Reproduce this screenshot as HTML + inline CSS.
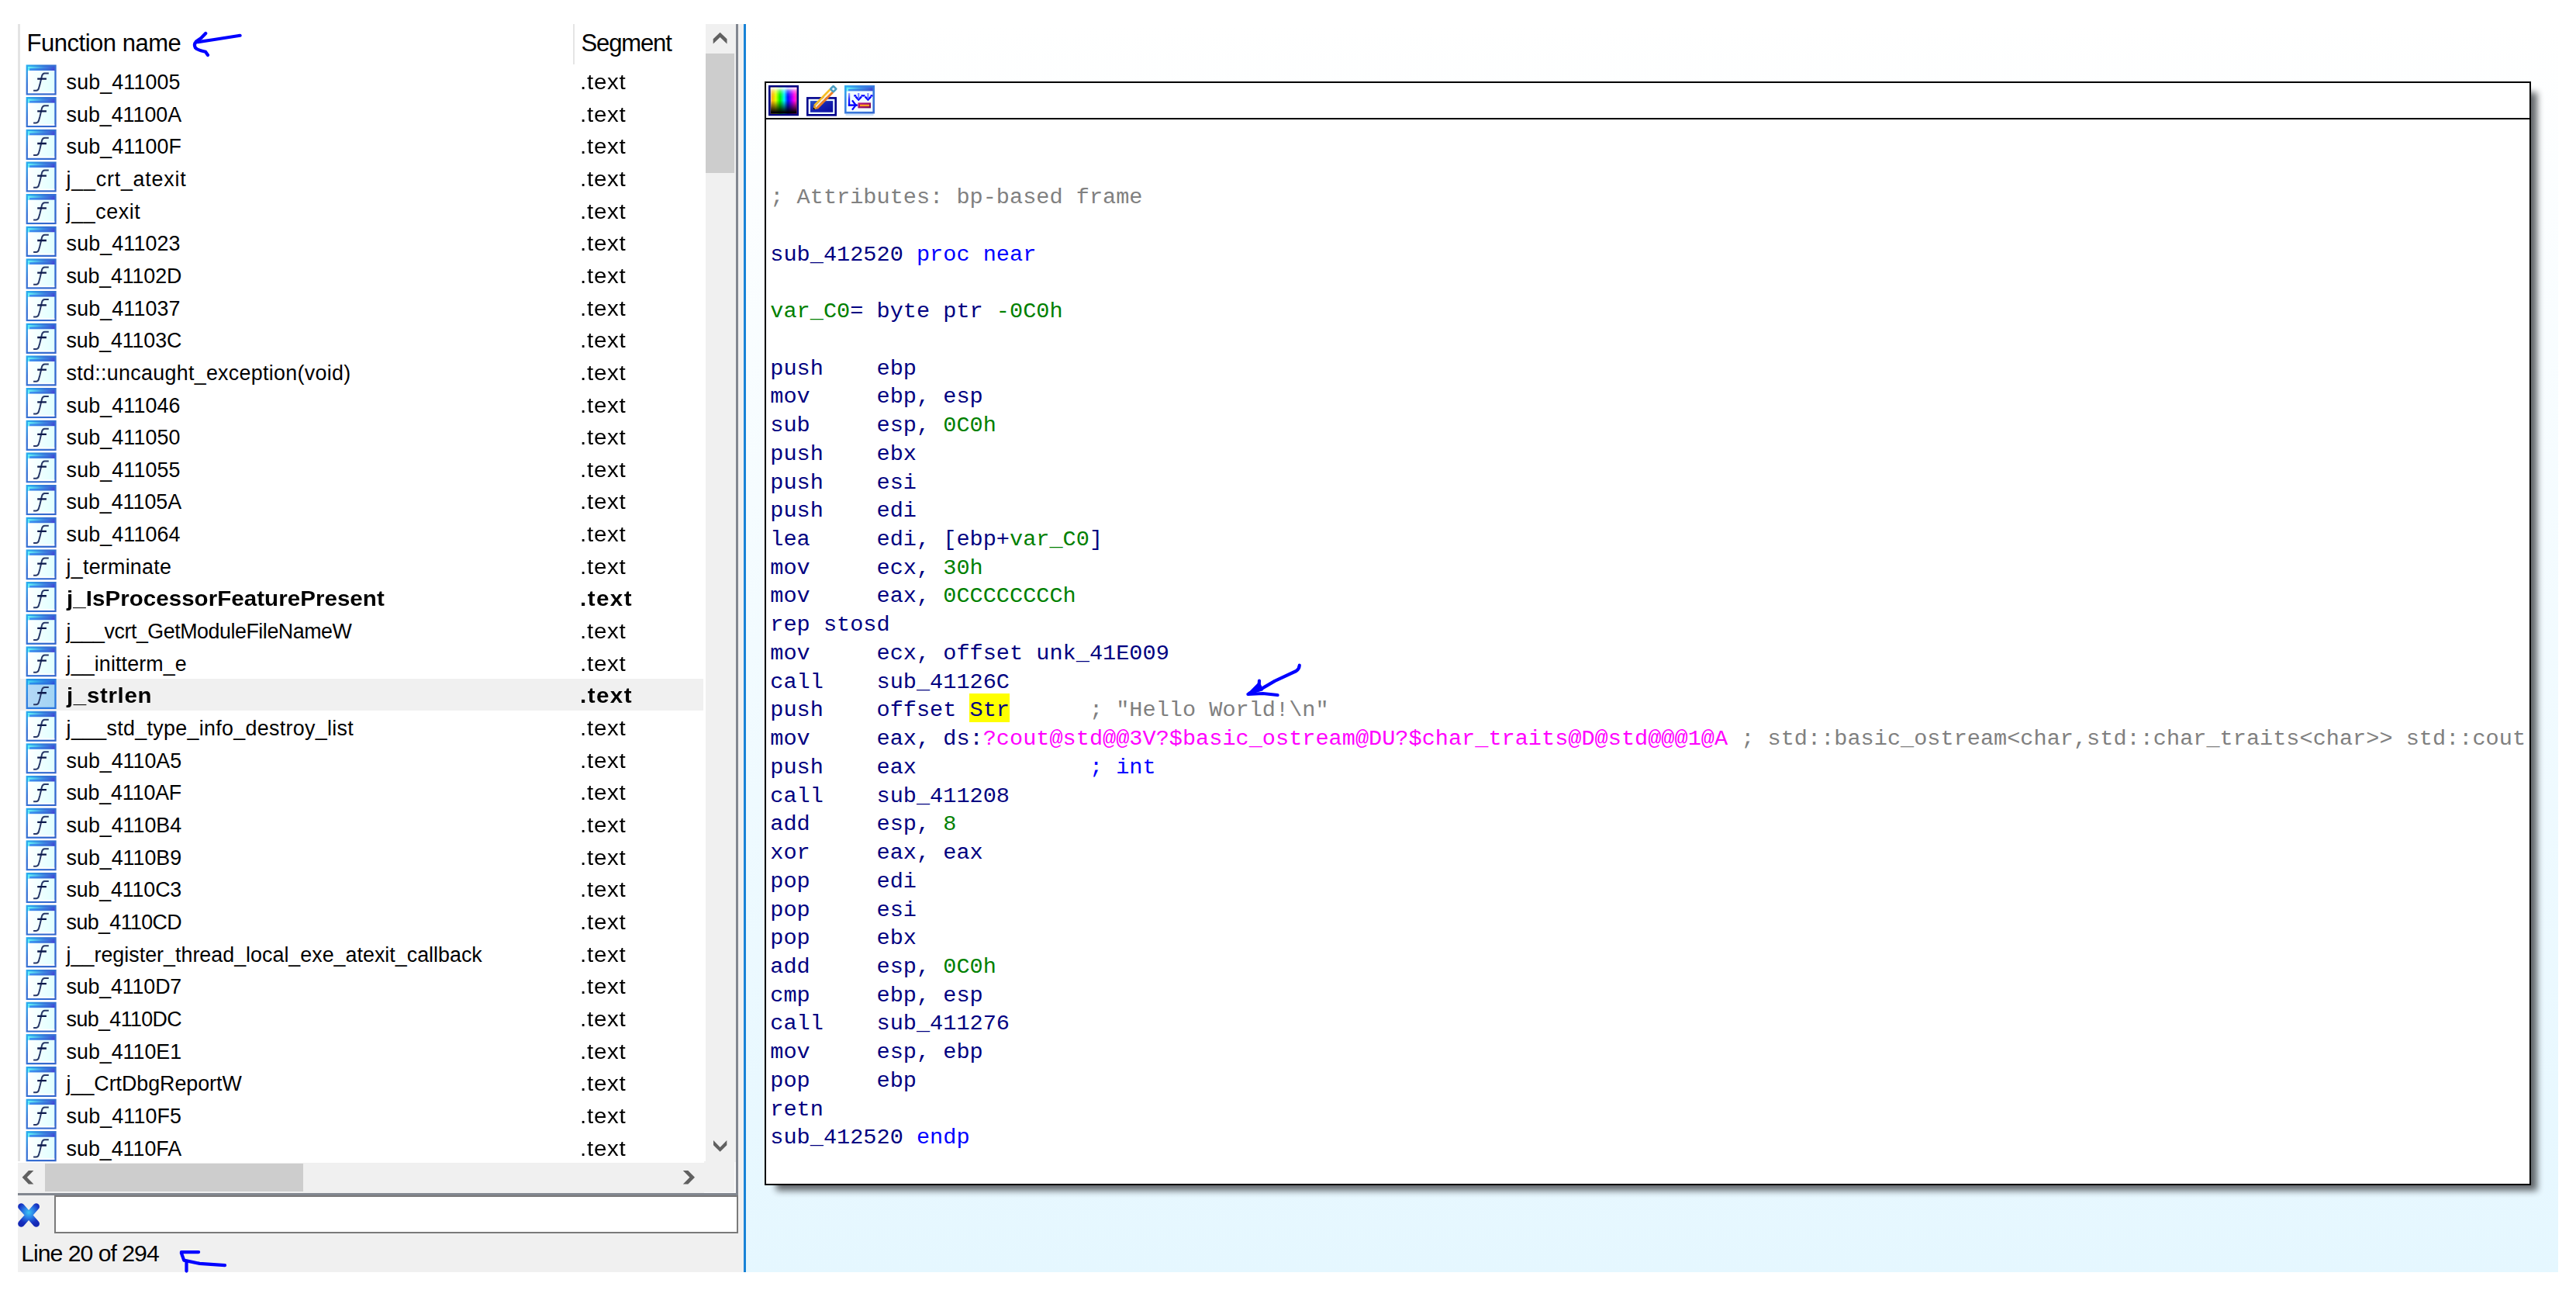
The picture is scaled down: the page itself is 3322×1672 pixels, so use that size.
<!DOCTYPE html>
<html><head><meta charset="utf-8"><title>IDA</title>
<style>
html,body{margin:0;padding:0;background:#fff;}
body{width:3322px;height:1672px;position:relative;overflow:hidden;font-family:"Liberation Sans",sans-serif;color:#000;}
.a{position:absolute;}
.t{position:absolute;white-space:pre;font-size:26.8px;line-height:40px;height:40px;color:#000;}
.b{font-weight:bold;}
.ic{position:absolute;left:33.4px;width:39.4px;height:39.4px;}
#code{position:absolute;left:993.3px;top:237.2px;margin:0;font-family:"Liberation Mono",monospace;font-size:28.54px;line-height:36.74px;white-space:pre;color:#000080;}
#code i{font-style:normal;}
.g{color:#808080;}.bl{color:#0000ff;}.gr{color:#008000;}.pk{color:#ff00ff;}.hl{}
</style></head><body>
<svg width="0" height="0" style="position:absolute">
<defs>
<linearGradient id="fb" x1="0" y1="0" x2="1" y2="1"><stop offset="0" stop-color="#27b4f2"/><stop offset="0.35" stop-color="#3572d6"/><stop offset="1" stop-color="#3566cc"/></linearGradient>
<linearGradient id="ft" x1="0" y1="0" x2="1" y2="0"><stop offset="0" stop-color="#66f6f8"/><stop offset="0.55" stop-color="#3f90e4"/><stop offset="1" stop-color="#3f50d6"/></linearGradient>
<linearGradient id="ft2" x1="0" y1="0" x2="1" y2="0"><stop offset="0" stop-color="#3a92f2"/><stop offset="0.8" stop-color="#3a68d4"/><stop offset="1" stop-color="#4440d8"/></linearGradient>
<linearGradient id="fi" x1="0" y1="0" x2="1" y2="0"><stop offset="0" stop-color="#ffffff"/><stop offset="0.5" stop-color="#eeffff"/><stop offset="1" stop-color="#e0ffff"/></linearGradient>
<linearGradient id="fis" x1="0" y1="0" x2="1" y2="0"><stop offset="0" stop-color="#b4d8f6"/><stop offset="1" stop-color="#a2d4f4"/></linearGradient>
<linearGradient id="fbs" x1="0" y1="0" x2="1" y2="1"><stop offset="0" stop-color="#1ca4f0"/><stop offset="0.35" stop-color="#2a7ce0"/><stop offset="1" stop-color="#2a74dc"/></linearGradient>
<linearGradient id="fts" x1="0" y1="0" x2="1" y2="0"><stop offset="0" stop-color="#44d8f4"/><stop offset="0.55" stop-color="#2f8fe6"/><stop offset="1" stop-color="#2c60dc"/></linearGradient>
<linearGradient id="fts2" x1="0" y1="0" x2="1" y2="0"><stop offset="0" stop-color="#2a90ee"/><stop offset="0.8" stop-color="#2a6cdc"/><stop offset="1" stop-color="#3048dc"/></linearGradient>
<symbol id="f" viewBox="0 0 39.4 39.4">
<rect x="0" y="0" width="39.4" height="39.4" fill="url(#fb)"/>
<rect x="2.5" y="2.5" width="34.4" height="2.6" fill="url(#ft)"/>
<rect x="2.5" y="5.1" width="2.4" height="2.6" fill="#6af2f8"/>
<rect x="4.9" y="5.1" width="32" height="2.6" fill="url(#ft2)"/>
<rect x="2.5" y="7.7" width="34.4" height="29.2" fill="url(#fi)"/>
<rect x="2.5" y="35.2" width="34.4" height="1.7" fill="#ffffff"/>
<path d="M29.4,11.2 L24.2,11.2 Q21.4,11.4 20.6,14.6 L18,25.6 L16.6,30.4 Q15.8,33.4 13.2,33.5 L9.7,33.5" fill="none" stroke="#283868" stroke-width="2.0"/>
<path d="M14.8,18.4 L26.5,18.4" fill="none" stroke="#0c1a4c" stroke-width="2.3"/>
</symbol>
<symbol id="fs" viewBox="0 0 39.4 39.4">
<rect x="0" y="0" width="39.4" height="39.4" fill="url(#fbs)"/>
<rect x="2.5" y="2.5" width="34.4" height="2.6" fill="url(#fts)"/>
<rect x="2.5" y="5.1" width="2.4" height="2.6" fill="#48d4f2"/>
<rect x="4.9" y="5.1" width="32" height="2.6" fill="url(#fts2)"/>
<rect x="2.5" y="7.7" width="34.4" height="29.2" fill="url(#fis)"/>
<path d="M29.4,11.2 L24.2,11.2 Q21.4,11.4 20.6,14.6 L18,25.6 L16.6,30.4 Q15.8,33.4 13.2,33.5 L9.7,33.5" fill="none" stroke="#283868" stroke-width="2.0"/>
<path d="M14.8,18.4 L26.5,18.4" fill="none" stroke="#0c1a4c" stroke-width="2.3"/>
</symbol>
</defs></svg>

<div class="a" style="left:23.2px;top:31px;width:2.7px;height:1466px;background:#e4e4e4"></div>
<div class="t" style="left:34.6px;top:35.9px;font-size:31px;letter-spacing:-0.489px">Function name</div>
<div class="a" style="left:739.2px;top:31px;width:2.2px;height:52px;background:#e5e5e5"></div>
<div class="t" style="left:749.6px;top:35.9px;font-size:31px;letter-spacing:-1.154px">Segment</div>
<div class="a" style="left:25.9px;top:874.9px;width:881.6px;height:41.4px;background:#f0f0f0"></div>
<svg class="a" style="left:33px;top:83px" width="42" height="42"><use href="#f" x="0.4" y="0.30" width="39.4" height="39.4"/></svg>
<div class="t" style="left:85.6px;top:85.90px;letter-spacing:0.145px">sub_411005</div>
<div class="t" style="left:747.5px;top:85.90px;letter-spacing:0.690px;transform:scaleX(1.10);transform-origin:0 0">.text</div>
<svg class="a" style="left:33px;top:124px" width="42" height="42"><use href="#f" x="0.4" y="0.96" width="39.4" height="39.4"/></svg>
<div class="t" style="left:85.6px;top:127.56px;letter-spacing:-0.002px">sub_41100A</div>
<div class="t" style="left:747.5px;top:127.56px;letter-spacing:0.690px;transform:scaleX(1.10);transform-origin:0 0">.text</div>
<svg class="a" style="left:33px;top:166px" width="42" height="42"><use href="#f" x="0.4" y="0.62" width="39.4" height="39.4"/></svg>
<div class="t" style="left:85.6px;top:169.22px;letter-spacing:0.148px">sub_41100F</div>
<div class="t" style="left:747.5px;top:169.22px;letter-spacing:0.690px;transform:scaleX(1.10);transform-origin:0 0">.text</div>
<svg class="a" style="left:33px;top:208px" width="42" height="42"><use href="#f" x="0.4" y="0.28" width="39.4" height="39.4"/></svg>
<div class="t" style="left:85.6px;top:210.88px;letter-spacing:0.794px">j__crt_atexit</div>
<div class="t" style="left:747.5px;top:210.88px;letter-spacing:0.690px;transform:scaleX(1.10);transform-origin:0 0">.text</div>
<svg class="a" style="left:33px;top:249px" width="42" height="42"><use href="#f" x="0.4" y="0.94" width="39.4" height="39.4"/></svg>
<div class="t" style="left:85.6px;top:252.54px;letter-spacing:0.618px">j__cexit</div>
<div class="t" style="left:747.5px;top:252.54px;letter-spacing:0.690px;transform:scaleX(1.10);transform-origin:0 0">.text</div>
<svg class="a" style="left:33px;top:291px" width="42" height="42"><use href="#f" x="0.4" y="0.60" width="39.4" height="39.4"/></svg>
<div class="t" style="left:85.6px;top:294.20px;letter-spacing:0.145px">sub_411023</div>
<div class="t" style="left:747.5px;top:294.20px;letter-spacing:0.690px;transform:scaleX(1.10);transform-origin:0 0">.text</div>
<svg class="a" style="left:33px;top:333px" width="42" height="42"><use href="#f" x="0.4" y="0.26" width="39.4" height="39.4"/></svg>
<div class="t" style="left:85.6px;top:335.86px;letter-spacing:-0.150px">sub_41102D</div>
<div class="t" style="left:747.5px;top:335.86px;letter-spacing:0.690px;transform:scaleX(1.10);transform-origin:0 0">.text</div>
<svg class="a" style="left:33px;top:374px" width="42" height="42"><use href="#f" x="0.4" y="0.92" width="39.4" height="39.4"/></svg>
<div class="t" style="left:85.6px;top:377.52px;letter-spacing:0.145px">sub_411037</div>
<div class="t" style="left:747.5px;top:377.52px;letter-spacing:0.690px;transform:scaleX(1.10);transform-origin:0 0">.text</div>
<svg class="a" style="left:33px;top:416px" width="42" height="42"><use href="#f" x="0.4" y="0.58" width="39.4" height="39.4"/></svg>
<div class="t" style="left:85.6px;top:419.18px;letter-spacing:-0.150px">sub_41103C</div>
<div class="t" style="left:747.5px;top:419.18px;letter-spacing:0.690px;transform:scaleX(1.10);transform-origin:0 0">.text</div>
<svg class="a" style="left:33px;top:458px" width="42" height="42"><use href="#f" x="0.4" y="0.24" width="39.4" height="39.4"/></svg>
<div class="t" style="left:85.6px;top:460.84px;letter-spacing:0.320px">std::uncaught_exception(void)</div>
<div class="t" style="left:747.5px;top:460.84px;letter-spacing:0.690px;transform:scaleX(1.10);transform-origin:0 0">.text</div>
<svg class="a" style="left:33px;top:499px" width="42" height="42"><use href="#f" x="0.4" y="0.90" width="39.4" height="39.4"/></svg>
<div class="t" style="left:85.6px;top:502.50px;letter-spacing:0.145px">sub_411046</div>
<div class="t" style="left:747.5px;top:502.50px;letter-spacing:0.690px;transform:scaleX(1.10);transform-origin:0 0">.text</div>
<svg class="a" style="left:33px;top:541px" width="42" height="42"><use href="#f" x="0.4" y="0.56" width="39.4" height="39.4"/></svg>
<div class="t" style="left:85.6px;top:544.16px;letter-spacing:0.145px">sub_411050</div>
<div class="t" style="left:747.5px;top:544.16px;letter-spacing:0.690px;transform:scaleX(1.10);transform-origin:0 0">.text</div>
<svg class="a" style="left:33px;top:583px" width="42" height="42"><use href="#f" x="0.4" y="0.22" width="39.4" height="39.4"/></svg>
<div class="t" style="left:85.6px;top:585.82px;letter-spacing:0.145px">sub_411055</div>
<div class="t" style="left:747.5px;top:585.82px;letter-spacing:0.690px;transform:scaleX(1.10);transform-origin:0 0">.text</div>
<svg class="a" style="left:33px;top:624px" width="42" height="42"><use href="#f" x="0.4" y="0.88" width="39.4" height="39.4"/></svg>
<div class="t" style="left:85.6px;top:627.48px;letter-spacing:-0.002px">sub_41105A</div>
<div class="t" style="left:747.5px;top:627.48px;letter-spacing:0.690px;transform:scaleX(1.10);transform-origin:0 0">.text</div>
<svg class="a" style="left:33px;top:666px" width="42" height="42"><use href="#f" x="0.4" y="0.54" width="39.4" height="39.4"/></svg>
<div class="t" style="left:85.6px;top:669.14px;letter-spacing:0.145px">sub_411064</div>
<div class="t" style="left:747.5px;top:669.14px;letter-spacing:0.690px;transform:scaleX(1.10);transform-origin:0 0">.text</div>
<svg class="a" style="left:33px;top:708px" width="42" height="42"><use href="#f" x="0.4" y="0.20" width="39.4" height="39.4"/></svg>
<div class="t" style="left:85.6px;top:710.80px;letter-spacing:0.267px">j_terminate</div>
<div class="t" style="left:747.5px;top:710.80px;letter-spacing:0.690px;transform:scaleX(1.10);transform-origin:0 0">.text</div>
<svg class="a" style="left:33px;top:749px" width="42" height="42"><use href="#f" x="0.4" y="0.86" width="39.4" height="39.4"/></svg>
<div class="t b" style="left:85.6px;top:752.46px;letter-spacing:0.061px;transform:scaleX(1.10);transform-origin:0 0">j_IsProcessorFeaturePresent</div>
<div class="t b" style="left:747.5px;top:752.46px;letter-spacing:1.342px;transform:scaleX(1.10);transform-origin:0 0">.text</div>
<svg class="a" style="left:33px;top:791px" width="42" height="42"><use href="#f" x="0.4" y="0.52" width="39.4" height="39.4"/></svg>
<div class="t" style="left:85.6px;top:794.12px;letter-spacing:-0.443px">j___vcrt_GetModuleFileNameW</div>
<div class="t" style="left:747.5px;top:794.12px;letter-spacing:0.690px;transform:scaleX(1.10);transform-origin:0 0">.text</div>
<svg class="a" style="left:33px;top:833px" width="42" height="42"><use href="#f" x="0.4" y="0.18" width="39.4" height="39.4"/></svg>
<div class="t" style="left:85.6px;top:835.78px;letter-spacing:0.137px">j__initterm_e</div>
<div class="t" style="left:747.5px;top:835.78px;letter-spacing:0.690px;transform:scaleX(1.10);transform-origin:0 0">.text</div>
<svg class="a" style="left:33px;top:874px" width="42" height="42"><use href="#fs" x="0.4" y="0.84" width="39.4" height="39.4"/></svg>
<div class="t b" style="left:85.6px;top:877.44px;letter-spacing:0.595px;transform:scaleX(1.10);transform-origin:0 0">j_strlen</div>
<div class="t b" style="left:747.5px;top:877.44px;letter-spacing:1.342px;transform:scaleX(1.10);transform-origin:0 0">.text</div>
<svg class="a" style="left:33px;top:916px" width="42" height="42"><use href="#f" x="0.4" y="0.50" width="39.4" height="39.4"/></svg>
<div class="t" style="left:85.6px;top:919.10px;letter-spacing:0.329px">j___std_type_info_destroy_list</div>
<div class="t" style="left:747.5px;top:919.10px;letter-spacing:0.690px;transform:scaleX(1.10);transform-origin:0 0">.text</div>
<svg class="a" style="left:33px;top:958px" width="42" height="42"><use href="#f" x="0.4" y="0.16" width="39.4" height="39.4"/></svg>
<div class="t" style="left:85.6px;top:960.76px;letter-spacing:-0.002px">sub_4110A5</div>
<div class="t" style="left:747.5px;top:960.76px;letter-spacing:0.690px;transform:scaleX(1.10);transform-origin:0 0">.text</div>
<svg class="a" style="left:33px;top:999px" width="42" height="42"><use href="#f" x="0.4" y="0.82" width="39.4" height="39.4"/></svg>
<div class="t" style="left:85.6px;top:1002.42px;letter-spacing:-0.148px">sub_4110AF</div>
<div class="t" style="left:747.5px;top:1002.42px;letter-spacing:0.690px;transform:scaleX(1.10);transform-origin:0 0">.text</div>
<svg class="a" style="left:33px;top:1041px" width="42" height="42"><use href="#f" x="0.4" y="0.48" width="39.4" height="39.4"/></svg>
<div class="t" style="left:85.6px;top:1044.08px;letter-spacing:-0.002px">sub_4110B4</div>
<div class="t" style="left:747.5px;top:1044.08px;letter-spacing:0.690px;transform:scaleX(1.10);transform-origin:0 0">.text</div>
<svg class="a" style="left:33px;top:1083px" width="42" height="42"><use href="#f" x="0.4" y="0.14" width="39.4" height="39.4"/></svg>
<div class="t" style="left:85.6px;top:1085.74px;letter-spacing:-0.002px">sub_4110B9</div>
<div class="t" style="left:747.5px;top:1085.74px;letter-spacing:0.690px;transform:scaleX(1.10);transform-origin:0 0">.text</div>
<svg class="a" style="left:33px;top:1124px" width="42" height="42"><use href="#f" x="0.4" y="0.80" width="39.4" height="39.4"/></svg>
<div class="t" style="left:85.6px;top:1127.40px;letter-spacing:-0.150px">sub_4110C3</div>
<div class="t" style="left:747.5px;top:1127.40px;letter-spacing:0.690px;transform:scaleX(1.10);transform-origin:0 0">.text</div>
<svg class="a" style="left:33px;top:1166px" width="42" height="42"><use href="#f" x="0.4" y="0.46" width="39.4" height="39.4"/></svg>
<div class="t" style="left:85.6px;top:1169.06px;letter-spacing:-0.594px">sub_4110CD</div>
<div class="t" style="left:747.5px;top:1169.06px;letter-spacing:0.690px;transform:scaleX(1.10);transform-origin:0 0">.text</div>
<svg class="a" style="left:33px;top:1208px" width="42" height="42"><use href="#f" x="0.4" y="0.12" width="39.4" height="39.4"/></svg>
<div class="t" style="left:85.6px;top:1210.72px;letter-spacing:0.032px">j__register_thread_local_exe_atexit_callback</div>
<div class="t" style="left:747.5px;top:1210.72px;letter-spacing:0.690px;transform:scaleX(1.10);transform-origin:0 0">.text</div>
<svg class="a" style="left:33px;top:1249px" width="42" height="42"><use href="#f" x="0.4" y="0.78" width="39.4" height="39.4"/></svg>
<div class="t" style="left:85.6px;top:1252.38px;letter-spacing:-0.150px">sub_4110D7</div>
<div class="t" style="left:747.5px;top:1252.38px;letter-spacing:0.690px;transform:scaleX(1.10);transform-origin:0 0">.text</div>
<svg class="a" style="left:33px;top:1291px" width="42" height="42"><use href="#f" x="0.4" y="0.44" width="39.4" height="39.4"/></svg>
<div class="t" style="left:85.6px;top:1294.04px;letter-spacing:-0.594px">sub_4110DC</div>
<div class="t" style="left:747.5px;top:1294.04px;letter-spacing:0.690px;transform:scaleX(1.10);transform-origin:0 0">.text</div>
<svg class="a" style="left:33px;top:1333px" width="42" height="42"><use href="#f" x="0.4" y="0.10" width="39.4" height="39.4"/></svg>
<div class="t" style="left:85.6px;top:1335.70px;letter-spacing:-0.002px">sub_4110E1</div>
<div class="t" style="left:747.5px;top:1335.70px;letter-spacing:0.690px;transform:scaleX(1.10);transform-origin:0 0">.text</div>
<svg class="a" style="left:33px;top:1374px" width="42" height="42"><use href="#f" x="0.4" y="0.76" width="39.4" height="39.4"/></svg>
<div class="t" style="left:85.6px;top:1377.36px;letter-spacing:-0.017px">j__CrtDbgReportW</div>
<div class="t" style="left:747.5px;top:1377.36px;letter-spacing:0.690px;transform:scaleX(1.10);transform-origin:0 0">.text</div>
<svg class="a" style="left:33px;top:1416px" width="42" height="42"><use href="#f" x="0.4" y="0.42" width="39.4" height="39.4"/></svg>
<div class="t" style="left:85.6px;top:1419.02px;letter-spacing:0.148px">sub_4110F5</div>
<div class="t" style="left:747.5px;top:1419.02px;letter-spacing:0.690px;transform:scaleX(1.10);transform-origin:0 0">.text</div>
<svg class="a" style="left:33px;top:1458px" width="42" height="42"><use href="#f" x="0.4" y="0.08" width="39.4" height="39.4"/></svg>
<div class="t" style="left:85.6px;top:1460.68px;letter-spacing:0.000px">sub_4110FA</div>
<div class="t" style="left:747.5px;top:1460.68px;letter-spacing:0.690px;transform:scaleX(1.10);transform-origin:0 0">.text</div>
<div class="a" style="left:910.3px;top:31px;width:38.8px;height:1466.5px;background:#f0f0f0"></div>
<div class="a" style="left:910.3px;top:69px;width:36.6px;height:154px;background:#cdcdcd"></div>
<div class="a" style="left:949.1px;top:31px;width:2.8px;height:1559.5px;background:#828790"></div>
<div class="a" style="left:951.9px;top:31px;width:7.1px;height:1609px;background:#f0f0f0"></div>
<div class="a" style="left:958.9px;top:31px;width:2.9px;height:1609px;background:#1883d7"></div>
<div class="a" style="left:23.2px;top:1498.8px;width:926px;height:39.6px;background:#f0f0f0"></div>
<div class="a" style="left:58px;top:1499.8px;width:332.8px;height:36.2px;background:#cdcdcd"></div>
<div class="a" style="left:907.8px;top:1496.8px;width:41.4px;height:42px;background:#f0f0f0"></div>
<div class="a" style="left:947px;top:1497.5px;width:2.1px;height:41px;background:#fbfbfb"></div>
<div class="a" style="left:907.8px;top:1536.6px;width:41.3px;height:1.8px;background:#fbfbfb"></div>
<div class="a" style="left:23.2px;top:1538.4px;width:935.8px;height:101.4px;background:#f0f0f0"></div>
<div class="a" style="left:23.2px;top:1538.4px;width:928.7px;height:2.7px;background:#828790"></div>
<div class="a" style="left:70.1px;top:1541px;width:1881.6px;height:49.2px;box-sizing:border-box;border:2.7px solid #7a7a7a;background:#fff;width:881.7px"></div>
<svg class="a" style="left:20px;top:1548px" width="36" height="38" viewBox="-17.05 -18.5 36 38">
<defs><radialGradient id="xg" gradientUnits="userSpaceOnUse" cx="0" cy="-3.5" r="18"><stop offset="0" stop-color="#3cc4f4"/><stop offset="0.4" stop-color="#2a7ce6"/><stop offset="0.8" stop-color="#1630c0"/><stop offset="1" stop-color="#1428b4"/></radialGradient></defs>
<path d="M-9.6,-11 L9.6,11 M9.6,-11 L-9.6,11" fill="none" stroke="url(#xg)" stroke-width="8.6" stroke-linecap="round"/>
</svg>
<div class="t" style="left:27.2px;top:1596.1px;font-size:30.2px;letter-spacing:-0.990px">Line 20 of 294</div>
<div class="a" style="left:961.8px;top:31px;width:2336.8px;height:1608.8px;background:linear-gradient(180deg,#ffffff 0%,#e5f7ff 100%)"></div>
<div class="a" style="left:1001px;top:119px;width:2271px;height:1416px;background:#54585c;filter:blur(4px);opacity:0.9"></div>
<div class="a" style="left:986.4px;top:105.3px;width:2277.6px;height:1422.9px;box-sizing:border-box;border:2.6px solid #000;background:#fff"></div>
<div class="a" style="left:986.4px;top:151.9px;width:2277.6px;height:2.6px;background:#000"></div>
<svg class="a" style="left:991px;top:110.3px" width="39.2" height="39.3" viewBox="0 0 39.2 39.3">
<defs>
<linearGradient id="hue" x1="0" y1="0" x2="1" y2="0">
<stop offset="0" stop-color="#ffd8b0"/><stop offset="0.07" stop-color="#ffb400"/><stop offset="0.2" stop-color="#e0ff00"/><stop offset="0.36" stop-color="#00f000"/>
<stop offset="0.52" stop-color="#00f0ff"/><stop offset="0.66" stop-color="#0010ff"/><stop offset="0.78" stop-color="#8000ff"/>
<stop offset="0.9" stop-color="#ff00f0"/><stop offset="1" stop-color="#ff40a0"/></linearGradient>
<linearGradient id="vw" x1="0" y1="0" x2="0" y2="1">
<stop offset="0" stop-color="#fff" stop-opacity="1"/><stop offset="0.05" stop-color="#fff" stop-opacity="0.8"/><stop offset="0.13" stop-color="#fff" stop-opacity="0.4"/><stop offset="0.25" stop-color="#fff" stop-opacity="0.1"/><stop offset="0.36" stop-color="#fff" stop-opacity="0"/>
<stop offset="0.5" stop-color="#000" stop-opacity="0"/><stop offset="0.95" stop-color="#000" stop-opacity="1"/><stop offset="1" stop-color="#000" stop-opacity="1"/></linearGradient>
</defs>
<rect width="39.2" height="39.3" fill="#000080"/>
<rect x="2.7" y="2.7" width="33.8" height="33.9" fill="url(#hue)"/>
<rect x="2.7" y="2.7" width="33.8" height="33.9" fill="url(#vw)"/>
</svg>
<svg class="a" style="left:1040px;top:106px" width="44" height="44" viewBox="0 -2 44 44">
<defs>
<linearGradient id="bf" x1="0" y1="0" x2="1" y2="1"><stop offset="0" stop-color="#2a58c8"/><stop offset="0.5" stop-color="#1420b0"/><stop offset="1" stop-color="#0a0a9c"/></linearGradient>
<linearGradient id="pb" x1="0" y1="0" x2="1" y2="1"><stop offset="0" stop-color="#ffd030"/><stop offset="0.45" stop-color="#ffc428"/><stop offset="0.5" stop-color="#fff6e0"/><stop offset="0.6" stop-color="#f08828"/><stop offset="1" stop-color="#e87020"/></linearGradient>
</defs>
<rect x="0" y="17.1" width="39" height="24.5" fill="#00008c"/>
<rect x="2.6" y="19.7" width="33.8" height="19.3" fill="#eefaff"/>
<rect x="5" y="22.1" width="29.2" height="14.6" fill="url(#bf)"/>
<g transform="translate(8.6,33.3) rotate(-45.6)">
<polygon points="0,0 5,-3.7 5,3.7" fill="#e8a020"/>
<polygon points="0,0 2.2,-1.6 2.2,1.6" fill="#000"/>
<rect x="5" y="-3.8" width="29" height="2.8" fill="#f6be24"/>
<rect x="5" y="-1.1" width="29" height="2.1" fill="#fff2d8"/>
<rect x="5" y="0.9" width="29" height="2.9" fill="#ec7c22"/>
<rect x="33.4" y="-3.9" width="7.8" height="7.8" rx="1.6" fill="#4a9cc0"/>
<rect x="35.9" y="-1.4" width="2.8" height="2.8" fill="#e8f6ff"/>
</g>
</svg>
<svg class="a" style="left:1089px;top:110.3px" width="42" height="40" viewBox="0 0 42 40">
<defs>
<linearGradient id="wb" x1="0" y1="0" x2="1" y2="1"><stop offset="0" stop-color="#30b4f4"/><stop offset="0.3" stop-color="#3a84e4"/><stop offset="1" stop-color="#3568d0"/></linearGradient>
<linearGradient id="mg" x1="0" y1="0" x2="1" y2="1"><stop offset="0" stop-color="#c01888"/><stop offset="1" stop-color="#700850"/></linearGradient>
<linearGradient id="vb" x1="0" y1="0" x2="0" y2="1"><stop offset="0" stop-color="#a8a8ff"/><stop offset="0.5" stop-color="#2020ff"/><stop offset="1" stop-color="#0000ff"/></linearGradient>
</defs>
<rect x="1.5" y="36" width="36" height="3.2" fill="#c4dcf8" opacity="0.8"/>
<rect x="0" y="0" width="39" height="36.5" fill="url(#wb)"/>
<rect x="2.6" y="2.6" width="33.8" height="2.4" fill="url(#ft)"/>
<rect x="2.6" y="5" width="2.4" height="2.4" fill="#6af2f8"/>
<rect x="5" y="5" width="31.4" height="2.4" fill="url(#ft2)"/>
<rect x="2.6" y="7.4" width="33.8" height="26.5" fill="#f2fdff"/>
<rect x="4.9" y="9.9" width="2.3" height="16.6" fill="url(#vb)"/>
<rect x="4.9" y="24.4" width="12" height="2.4" fill="#0000ff"/>
<path d="M10,19.4 L14.6,25.6 L10,31.6" fill="none" stroke="#0000ff" stroke-width="2.3"/>
<path d="M12.2,13.4 h3 M21.5,13.4 h5 M33.5,13.4 h3" stroke="#0000ff" stroke-width="2.3" fill="none"/>
<path d="M14.4,14.6 L18.2,18.6 L22,14.6 M26.6,14.6 L30.4,18.6 L34.2,14.6" fill="none" stroke="#0000ff" stroke-width="2.3"/>
<path d="M18.2,9.9 v8 M30.4,9.9 v8" stroke="#5060ff" stroke-width="2.2" opacity="0.75"/>
<rect x="17.4" y="22.4" width="16.6" height="7" fill="url(#mg)"/>
<rect x="20" y="24.7" width="12" height="2.4" fill="#ffa020"/>
</svg>
<div class="a" style="left:1250.3px;top:894.3px;width:51.9px;height:36.3px;background:#ffff00"></div>
<pre id="code" style="letter-spacing:0.028px"><i class="g">; Attributes: bp-based frame</i>

sub_412520 <i class="bl">proc near</i>

<i class="gr">var_C0</i>= byte ptr <i class="gr">-0C0h</i>

push    ebp
mov     ebp, esp
sub     esp, <i class="gr">0C0h</i>
push    ebx
push    esi
push    edi
lea     edi, [ebp+<i class="gr">var_C0</i>]
mov     ecx, <i class="gr">30h</i>
mov     eax, <i class="gr">0CCCCCCCCh</i>
rep stosd
mov     ecx, offset unk_41E009
call    sub_41126C
push    offset <i class="hl">Str</i>      <i class="g">; "Hello World!\n"</i>
mov     eax, ds:<i class="pk">?cout@std@@3V?$basic_ostream@DU?$char_traits@D@std@@@1@A</i> <i class="g">; std::basic_ostream&lt;char,std::char_traits&lt;char&gt;&gt; std::cout</i>
push    eax             <i class="bl">; int</i>
call    sub_411208
add     esp, <i class="gr">8</i>
xor     eax, eax
pop     edi
pop     esi
pop     ebx
add     esp, <i class="gr">0C0h</i>
cmp     ebp, esp
call    sub_411276
mov     esp, ebp
pop     ebp
retn
sub_412520 <i class="bl">endp</i></pre>
<svg class="a" style="left:0;top:0" width="3322" height="1672" viewBox="0 0 3322 1672">
<g fill="#606060">
<polygon points="919.7,50.3 928.6,41.7 937.5,50.3 937.5,56.5 928.6,47.9 919.7,56.5"/>
<polygon points="920,1469.9 928.65,1478.9 937.3,1469.9 937.3,1476.2 928.65,1484.8 920,1476.2"/>
<polygon points="880.8,1509.1 887.3,1509.1 896,1517.8 887.3,1526.5 880.8,1526.5 889.4,1517.8"/>
<polygon points="43.4,1509.1 36.9,1509.1 28.6,1517.8 36.9,1526.5 43.4,1526.5 34.8,1517.8"/>
</g>
<g fill="none" stroke="#0000ff" stroke-width="4.2" stroke-linecap="round" stroke-linejoin="round">
<path d="M309.6,45.8 L276.3,51 L253,54.4"/>
<path d="M265.2,43 L259.4,49 L253,53.4 Q249.4,57 252,61.6 Q254,64 265,66.8 L268,71"/>
<path d="M1675.8,857.6 Q1675.4,862.6 1671.6,865 L1644,877.9 L1627.8,887.4 L1611,893.6"/>
<path d="M1624,877.6 L1623.4,886.2"/>
<path d="M1609.4,895 L1628.6,894 L1647.6,896"/>
<path d="M1611,893.8 L1623.6,881 L1627.6,889 Z" fill="#0000ff" stroke-width="3"/>
<path d="M256.1,1614.1 L233.9,1614.1"/>
<path d="M233.9,1615.2 L237.2,1624.6 L257.4,1628.9 L290,1631.2"/>
<path d="M240.5,1626.4 L240.5,1638.6"/>
</g></svg>
</body></html>
